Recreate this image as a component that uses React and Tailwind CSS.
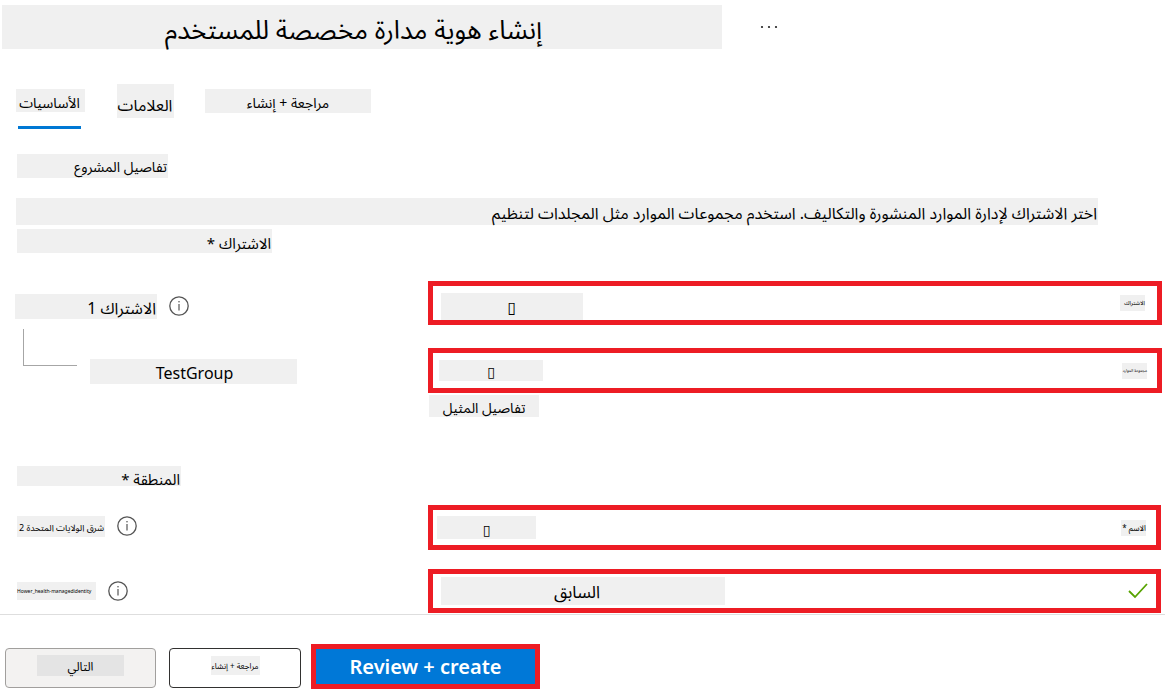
function Chip({ as: Tag = "span", className = "", children, ...rest }) {
  return (
    <Tag className={`block bg-[#f0f0f0] whitespace-nowrap ${className}`} {...rest}>
      {children}
    </Tag>
  );
}

function InfoButton({ label }) {
  return (
    <button type="button" aria-label={label} className="block size-5 shrink-0">
      <svg viewBox="0 0 20 20" className="size-5" fill="none" stroke="#555" aria-hidden="true">
        <circle cx="10" cy="10" r="9.2" strokeWidth="1.3" />
        <path d="M10 8v6.5" strokeWidth="1.2" />
        <circle cx="10" cy="5.8" r="0.8" fill="#555" stroke="none" />
      </svg>
    </button>
  );
}

function Field({ className = "", children }) {
  return (
    <div className={`flex min-w-0 flex-1 items-center border-5 border-[#ed1c24] bg-white ${className}`}>
      {children}
    </div>
  );
}

export default function App() {
  return (
    <div className="bg-white font-['Noto_Sans','Noto_Sans_Arabic','DejaVu_Sans',sans-serif] text-black">
      <header className="flex items-start pt-[5px] pl-0.5">
        <Chip as="h1" dir="rtl" className="h-11 w-[720px] pr-[180px] text-[26px] leading-12">
          إنشاء هوية مدارة مخصصة للمستخدم
        </Chip>
        <button type="button" aria-label="المزيد" className="mt-3 ml-[35px] flex h-5 w-6 items-center justify-center">
          <svg viewBox="0 0 20 4" className="h-1 w-5" fill="#222" aria-hidden="true">
            <circle cx="3" cy="2" r="1.1" />
            <circle cx="10" cy="2" r="1.1" />
            <circle cx="17" cy="2" r="1.1" />
          </svg>
        </button>
      </header>

      <div role="tablist" className="mt-[35px] flex items-start pl-4">
        <button type="button" role="tab" aria-selected="true" className="mt-[5px] w-[69px]">
          <Chip dir="rtl" className="h-[23px] pr-0.5 text-sm leading-7">الأساسيات</Chip>
          <span className="mt-3.5 mr-1 ml-0.5 block h-[3px] bg-[#0078d4]" />
        </button>
        <button type="button" role="tab" aria-selected="false" className="ml-8 w-[57px]">
          <Chip dir="rtl" className="h-[34px] pr-px text-base leading-[42px]">العلامات</Chip>
        </button>
        <button type="button" role="tab" aria-selected="false" className="mt-[5px] ml-[31px] w-[166px]">
          <Chip dir="rtl" className="h-6 text-sm leading-7">مراجعة + إنشاء</Chip>
        </button>
      </div>

      <main className="pr-[3px]">
        <Chip as="h2" dir="rtl" className="mt-[25px] ml-[17px] h-6 w-[151px] pr-px text-sm leading-[26px]">
          تفاصيل المشروع
        </Chip>
        <Chip as="p" dir="rtl" className="mt-5 mr-16 ml-4 h-[27px] pr-px text-base leading-[30px]">
          اختر الاشتراك لإدارة الموارد المنشورة والتكاليف. استخدم مجموعات الموارد مثل المجلدات لتنظيم
        </Chip>
        <Chip as="p" dir="rtl" className="mt-1 ml-[17px] h-6 w-[255px] pr-px text-[15px] leading-7">
          الاشتراك *
        </Chip>

        <div className="mt-7 flex">
          <div className="flex w-[428px] shrink-0 items-start gap-3 pt-[13px] pl-[15px]">
            <Chip dir="rtl" className="h-[25px] w-[142px] pr-px text-base leading-7">الاشتراك 1</Chip>
            <div className="pt-0.5"><InfoButton label="معلومات الاشتراك" /></div>
          </div>
          <Field className="h-11">
            <select id="subscription" className="mt-1.5 ml-2 h-[27px] w-[142px] appearance-none bg-[#f0f0f0] pt-0.5 text-center text-base">
              <option>▯</option>
            </select>
            <label htmlFor="subscription" dir="rtl" className="mr-3 ml-auto block h-4 w-[25px] bg-[#f0f0f0] text-[6px] leading-4 whitespace-nowrap">
              الاشتراك
            </label>
          </Field>
        </div>

        <div className="mt-[23px] flex">
          <div className="flex w-[428px] shrink-0 items-start gap-[13px] pl-[23px]">
            <span className="-mt-[19px] block h-[37px] w-[54px] border-b border-l border-[#a6a6a6]" />
            <Chip className="mt-[11px] h-[25px] w-[207px] pl-0.5 text-center text-base leading-7">TestGroup</Chip>
          </div>
          <Field className="h-[45px]">
            <select id="group" className="ml-1.5 h-[21px] w-[104px] appearance-none bg-[#f0f0f0] pt-0.5 text-center text-sm">
              <option>▯</option>
            </select>
            <label htmlFor="group" dir="rtl" className="mr-2.5 ml-auto block h-4 w-[25px] bg-[#f0f0f0] text-[4px] leading-4 whitespace-nowrap">
              مجموعة الموارد
            </label>
          </Field>
        </div>

        <Chip as="h2" dir="rtl" className="mt-0.5 ml-[429px] h-[22px] w-[110px] text-center text-sm leading-[26px]">
          تفاصيل المثيل
        </Chip>
        <Chip as="p" dir="rtl" className="mt-[49px] ml-[17px] h-5 w-[164px] pr-px text-[15px] leading-[26px]">
          المنطقة *
        </Chip>

        <div className="mt-[19px] flex pr-px">
          <div className="flex w-[428px] shrink-0 items-start gap-3 pt-[11px] pl-[17px]">
            <Chip dir="rtl" className="h-[21px] w-[88px] pr-px text-[9px] leading-6">شرق الولايات المتحدة 2</Chip>
            <InfoButton label="معلومات المنطقة" />
          </div>
          <Field className="h-[45px]">
            <select id="region" className="ml-1 h-[23px] w-[99px] appearance-none bg-[#f0f0f0] pt-1 text-center text-sm">
              <option>▯</option>
            </select>
            <label htmlFor="region" dir="rtl" className="mr-2.5 ml-auto block h-4 w-[25px] bg-[#f0f0f0] text-[8px] leading-4 whitespace-nowrap">
              الاسم *
            </label>
          </Field>
        </div>

        <div className="mt-[19px] flex pr-px">
          <div className="flex w-[428px] shrink-0 items-center gap-3 pl-[17px]">
            <Chip as="label" htmlFor="identity" className="h-[18px] w-[79px] text-[5px] leading-[18px]">
              Hower_health-managedidentity
            </Chip>
            <InfoButton label="معلومات الاسم" />
          </div>
          <Field className="h-11">
            <input id="identity" dir="rtl" defaultValue="السابق" className="ml-2 h-7 w-[284px] bg-[#f0f0f0] pt-1 pr-3 text-center text-[17px] leading-6" />
            <svg viewBox="0 0 20 16" className="mr-2 ml-auto h-4 w-5" fill="none" stroke="#57a300" strokeWidth="1.8" aria-hidden="true">
              <path d="M1 8l6 6L19 1" />
            </svg>
          </Field>
        </div>
      </main>

      <footer className="mt-px flex items-start border-t border-[#dedede] pt-[29px] pl-[5px]">
        <button type="button" className="mt-1 flex h-10 w-[151px] justify-center rounded-sm border border-[#a19f9d] bg-[#f3f2f1] pt-1.5">
          <span dir="rtl" className="block h-[21px] w-[87px] bg-[#e4e4e4] text-xs leading-6">التالي</span>
        </button>
        <button type="button" className="mt-1 ml-[13px] flex h-10 w-[132px] justify-center rounded-sm border border-[#323130] bg-white pt-[7px]">
          <Chip dir="rtl" className="h-[19px] w-[49px] text-[8px] leading-5">مراجعة + إنشاء</Chip>
        </button>
        <button type="button" className="ml-2.5 h-[45px] w-[229px] border-5 border-[#ed1c24] bg-[#0078d7] text-xl font-semibold text-white">
          Review + create
        </button>
      </footer>
    </div>
  );
}
